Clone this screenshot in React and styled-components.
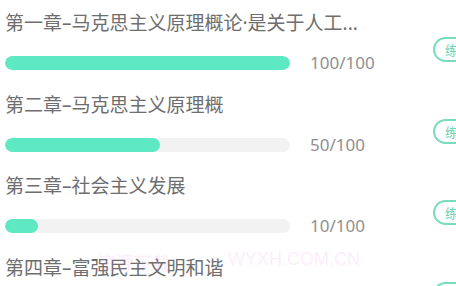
import React from "react";
import styled, { createGlobalStyle } from "styled-components";

const GlobalStyle = createGlobalStyle`
  html, body {
    margin: 0;
    padding: 0;
    background: #ffffff;
    overflow: hidden;
  }
  body {
    font-family: "Noto Sans CJK SC", "Noto Sans", sans-serif;
  }
`;

const Page = styled.div`
  position: relative;
  width: 456px;
  height: 286px;
  overflow: hidden;
  background: #fff;
`;

const List = styled.div`
  display: flex;
  flex-direction: column;
`;

const Item = styled.div`
  display: flex;
  align-items: flex-start;
  padding: 10px 0 6.5px 5px;
`;

const Main = styled.div`
  width: 428px;
  flex-shrink: 0;
  display: flex;
  flex-direction: column;
  gap: 15px;
`;

const Title = styled.div`
  font-family: "Noto Sans", "Noto Sans CJK SC", sans-serif;
  font-size: 19px;
  line-height: 26px;
  color: #6e6e6e;
  white-space: nowrap;
`;

const BarRow = styled.div`
  display: flex;
  align-items: center;
  gap: 20px;
  height: 24px;
`;

const Track = styled.div`
  width: 285px;
  height: 14px;
  border-radius: 7px;
  background: #f2f2f2;
  overflow: hidden;
`;

const Fill = styled.div`
  height: 100%;
  border-radius: 7px;
  background: #5ee8c4;
`;

const Count = styled.span`
  font-family: "Noto Sans", sans-serif;
  font-size: 17px;
  line-height: 24px;
  color: #8f8f8f;
`;

const PracticeButton = styled.button`
  flex-shrink: 0;
  margin-top: 27px;
  height: 25px;
  padding: 0 10px;
  border: 2px solid #78dcbd;
  border-radius: 13px;
  background: #fff;
  color: #6ad6b4;
  font-family: "Noto Sans CJK SC", sans-serif;
  font-size: 13px;
  line-height: 21px;
  white-space: nowrap;
`;

const Watermark = styled.div`
  position: absolute;
  left: 98px;
  top: 249px;
  display: flex;
  font-family: "Liberation Sans", "Noto Sans CJK SC", sans-serif;
  font-size: 18px;
  color: rgba(240, 110, 215, 0.14);
  pointer-events: none;
  white-space: nowrap;
`;

const WatermarkPart = styled.span`
  width: ${(p) => p.$width || "auto"};
`;

const chapters = [
  { title: "第一章–马克思主义原理概论·是关于人工...", done: 100, fill: 100 },
  { title: "第二章–马克思主义原理概", done: 50, fill: 54.4 },
  { title: "第三章–社会主义发展", done: 10, fill: 11.6 },
  { title: "第四章–富强民主文明和谐", done: 0, fill: 0 },
];

const App = () => {
  return (
    <Page>
      <GlobalStyle />
      <List>
        {chapters.map((c) => (
          <Item key={c.title}>
            <Main>
              <Title>{c.title}</Title>
              <BarRow>
                <Track>
                  <Fill style={{ width: `${c.fill}%` }} />
                </Track>
                <Count>{c.done}/100</Count>
              </BarRow>
            </Main>
            <PracticeButton>练习</PracticeButton>
          </Item>
        ))}
      </List>
      <Watermark>
        <WatermarkPart $width="130px">资源下载</WatermarkPart>
        <WatermarkPart>WYXH.COM.CN</WatermarkPart>
      </Watermark>
    </Page>
  );
};

export default App;
